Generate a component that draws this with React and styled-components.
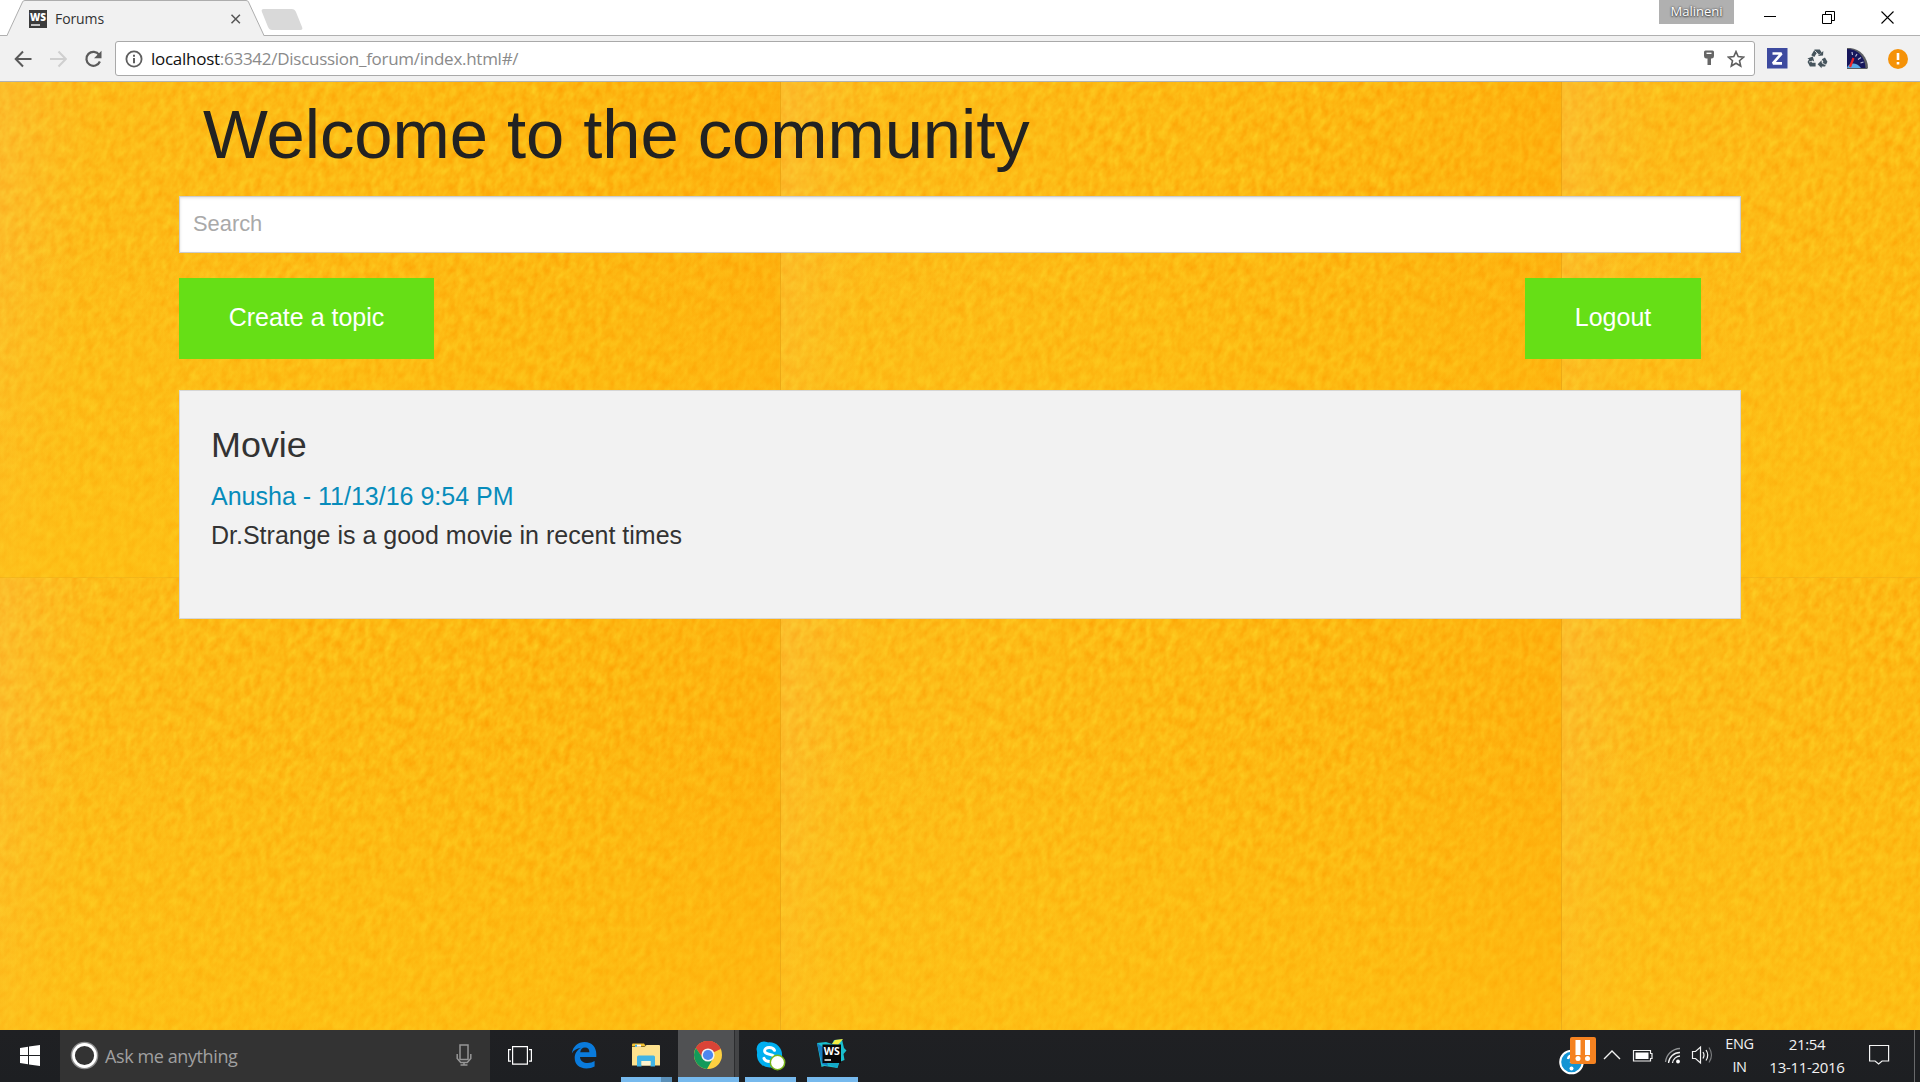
import React from "react";
import styled, { createGlobalStyle } from "styled-components";

const GlobalStyle = createGlobalStyle`
  html, body { margin: 0; padding: 0; overflow: hidden; }
  * { box-sizing: border-box; }
  svg { display: block; flex: none; }
`;

const ui = `"Open Sans", "Noto Sans", sans-serif`;
const arial = `"Liberation Sans", Arial, sans-serif`;

const Screen = styled.div`
  width: 1920px;
  height: 1082px;
  display: flex;
  flex-direction: column;
  overflow: hidden;
  background: #fff;
`;

/* ---------- browser frame ---------- */
const TabStrip = styled.div`
  height: 36px;
  display: flex;
  align-items: flex-start;
  background: linear-gradient(#b0b0b0, #b0b0b0) left bottom / 100% 1px no-repeat #fff;
`;
const Tab = styled.div`
  position: relative;
  width: 257px;
  height: 36px;
  margin-left: 7px;
  padding: 1px 22px 0 22px;
  display: flex;
  align-items: center;
`;
const TabShape = styled.svg`
  position: absolute;
  left: 0;
  top: 0;
`;
const TabIcon = styled.svg`
  position: relative;
`;
const TabTitle = styled.span`
  position: relative;
  flex: 1;
  margin-left: 8px;
  font: 14px/20px ${ui};
  letter-spacing: -0.1px;
  color: #333;
`;
const CloseGlyph = styled.svg`
  position: relative;
`;
const NewTab = styled.div`
  width: 34px;
  height: 21px;
  margin: 9px 0 0 1px;
  border-radius: 3px;
  background: #d9d9d9;
  transform: skewX(22deg);
`;
const StripSpacer = styled.div`
  flex: 1;
`;
const UserBadge = styled.div`
  width: 75px;
  height: 24px;
  background: #b0b0b0;
  color: #fff;
  font: 13px/22px ${ui};
  letter-spacing: 0px;
  text-align: center;
  text-shadow: 0 0 2px #333, 0 1px 2px #444;
`;
const WindowButton = styled.div`
  width: 58.5px;
  height: 34px;
  display: flex;
  align-items: center;
  justify-content: center;
`;
const WindowButtons = styled.div`
  display: flex;
  width: 186px;
  padding-left: 7px;
`;

const Toolbar = styled.div`
  height: 46px;
  display: flex;
  align-items: center;
  background: #f1f1f1;
  border-bottom: 1px solid #b2b2b2;
`;
const NavButtons = styled.div`
  width: 115px;
  padding-left: 14px;
  display: flex;
  gap: 17px;
`;
const AddressBar = styled.div`
  width: 1640px;
  height: 35px;
  padding: 0 9px 0 9px;
  display: flex;
  align-items: center;
  background: #fff;
  border: 1px solid #a9a9a9;
  border-radius: 3px;
`;
const Url = styled.span`
  flex: 1;
  margin-left: 8px;
  font: 17px/24px ${ui};
  letter-spacing: -0.27px;
  color: #8a8a8a;
  b { font-weight: 400; color: #111; }
`;
const AddressIcons = styled.div`
  display: flex;
  align-items: center;
  gap: 12px;
`;
const Extensions = styled.div`
  display: flex;
  align-items: center;
  gap: 19px;
  padding-left: 12px;
`;

/* ---------- page ---------- */
const Page = styled.main`
  position: relative;
  height: 948px;
  overflow: hidden;
  background: #fdb813;
  font-family: ${arial};
`;
const PaperBackdrop = styled.svg`
  position: absolute;
  left: 0;
  top: 0;
`;
const Container = styled.div`
  position: relative;
  width: 1562px;
  margin: 0 auto;
`;
const Title = styled.h1`
  margin: 0;
  height: 114px;
  padding: 5px 0 0 24px;
  font-weight: 400;
  font-size: 68.75px;
  line-height: 96px;
  letter-spacing: -0.05px;
  color: #222;
`;
const SearchField = styled.input`
  display: block;
  width: 100%;
  height: 57px;
  margin: 0 0 25px;
  padding: 0 12px 1px 13px;
  border: 1px solid #ccc;
  border-radius: 0;
  outline: 0;
  background: #fff;
  box-shadow: inset 0 1px 3px rgba(0, 0, 0, 0.12);
  font: 21.875px ${arial};
  &::placeholder { color: #a9a9a9; opacity: 1; }
`;
const Actions = styled.div`
  display: flex;
  justify-content: space-between;
  padding-right: 40px;
  margin-bottom: 31px;
`;
const Button = styled.button`
  height: 81px;
  width: ${(p) => p.$width}px;
  padding: 0 0 2px;
  border: 0;
  background: #66df16;
  color: #fff;
  font: 25px ${arial};
  white-space: nowrap;
`;
const Topic = styled.article`
  height: 229px;
  padding: 30px 31px;
  border: 1px solid #d6d6d6;
  background: #f2f2f2;
  color: #333;
`;
const TopicTitle = styled.h3`
  margin: 0;
  font-weight: 400;
  font-size: 35.94px;
  line-height: 48px;
`;
const TopicMeta = styled.a`
  display: block;
  margin-top: 7px;
  font-size: 25px;
  line-height: 40px;
  color: #078cbb;
`;
const TopicText = styled.p`
  margin: 0;
  font-size: 25px;
  line-height: 38px;
`;

/* ---------- taskbar ---------- */
const Taskbar = styled.footer`
  height: 52px;
  display: flex;
  background: linear-gradient(#1f2023, #1d1f22);
`;
const StartButton = styled.div`
  width: 60px;
  padding: 15px 0 0 20px;
`;
const Cortana = styled.div`
  width: 430px;
  display: flex;
  align-items: center;
  padding: 0 18px 0 10px;
  background: #333;
`;
const CortanaText = styled.span`
  flex: 1;
  margin-left: 6px;
  padding-bottom: 1px;
  font: 18px/26px ${ui};
  letter-spacing: -0.4px;
  color: #a0a0a0;
`;
const TaskItem = styled.div`
  position: relative;
  width: ${(p) => p.$width}px;
  margin-left: ${(p) => p.$gap || 0}px;
  display: flex;
  justify-content: center;
  padding-top: ${(p) => p.$top}px;
  padding-right: ${(p) => p.$shift || 0}px;
  background: ${(p) => (p.$active ? "linear-gradient(90deg, #505153 56px, #2c2d2f 56px, #2c2d2f 57px, #434446 57px)" : "none")};
`;
const Running = styled.i`
  position: absolute;
  left: 0;
  right: 0;
  bottom: 0;
  height: 5px;
  background: ${(p) => (p.$stacked ? "linear-gradient(90deg, #76b9ed 40px, #5a8fb8 40px)" : "#76b9ed")};
`;
const Tray = styled.div`
  margin-left: auto;
  width: 362px;
  display: flex;
  color: #f2f2f2;
`;
const TrayIcons = styled.div`
  width: 163px;
`;
const TrayText = styled.div`
  width: ${(p) => p.$width}px;
  padding-top: 3px;
  font: ${(p) => p.$size}px/22.500px ${ui};
  letter-spacing: ${(p) => p.$track}px;
  text-align: center;
  white-space: nowrap;
`;
const ActionCenter = styled.div`
  padding: 14px 0 0 ${(p) => p.$left}px;
`;
const DesktopEdge = styled.div`
  width: 6px;
  margin-left: auto;
  border-left: 1px solid #68696b;
`;

const Paper = () => {
  const tiles = [];
  [0, 496].forEach((y) => [0, 781, 1562].forEach((x) => tiles.push([x, y])));
  return (
    <PaperBackdrop width="1920" height="948" viewBox="0 0 1920 948">
      <defs>
        <filter id="grain" x="0" y="0" width="1" height="1" colorInterpolationFilters="sRGB">
          <feTurbulence type="fractalNoise" baseFrequency="0.15 0.09" numOctaves="3" seed="7" />
          <feColorMatrix values="0 0 0 0 0.992  0.24 0 0 0 0.6  0.16 0 0 0 -0.01  0 0 0 0 1" />
        </filter>
        <clipPath id="tile">
          <rect width="781" height="496" />
        </clipPath>
        <linearGradient id="shade" x1="0" x2="1" y1="0.2" y2="0.25">
          <stop offset="0" stopColor="#fac656" stopOpacity="0.36" />
          <stop offset="0.12" stopColor="#fcc52c" stopOpacity="0.28" />
          <stop offset="0.5" stopColor="#fdc01c" stopOpacity="0.18" />
          <stop offset="0.75" stopColor="#ffae0e" stopOpacity="0.15" />
          <stop offset="1" stopColor="#ffa60a" stopOpacity="0.4" />
        </linearGradient>
        <linearGradient id="foot" x1="0" x2="0" y1="0" y2="1">
          <stop offset="0.3" stopColor="#fec414" stopOpacity="0" />
          <stop offset="1" stopColor="#fec414" stopOpacity="0.5" />
        </linearGradient>
      </defs>
      {tiles.map(([x, y]) => (
        <g key={`${x}-${y}`} transform={`translate(${x} ${y})`} clipPath="url(#tile)">
          <g transform="rotate(24 390 248)">
            <rect x="-100" y="-220" width="981" height="936" filter="url(#grain)" />
          </g>
          <rect width="781" height="496" fill="url(#shade)" />
          <rect width="781" height="496" fill="url(#foot)" />
          <path d="M780.5 0v496" stroke="#d99c20" strokeOpacity="0.45" />
          <path d="M0 495.5h781" stroke="#d99c20" strokeOpacity="0.25" />
        </g>
      ))}
    </PaperBackdrop>
  );
};

const WsSmall = () => (
  <TabIcon width="18" height="18" viewBox="0 0 18 18">
    <rect width="18" height="18" fill="#3b3b3b" />
    <text x="9" y="11" fontFamily="Open Sans, sans-serif" fontSize="10.5" fontWeight="800" fill="#fff" textAnchor="middle" textLength="16" lengthAdjust="spacingAndGlyphs">WS</text>
    <path d="M2 15h9" stroke="#fff" strokeWidth="1.4" />
  </TabIcon>
);

const Recycle = () => (
  <svg width="21" height="21" viewBox="0 0 21 21" fill="none" stroke="#46545c" strokeWidth="3.6">
    <path d="M5.8 8.2 8.6 3.4h3.2l1.5 2.4" />
    <path d="M10.9 8l5.1-.4.3-4.6z" fill="#46545c" stroke="none" />
    <path d="M16.4 10.4l2 3.4-1.4 2.8h-3" />
    <path d="M14.6 12.2v8l-4-4z" fill="#46545c" stroke="none" />
    <path d="M8.6 16.6H4L2.6 14l1.4-2.6" />
    <path d="M.4 10.6l5.4-2.2 1.4 5z" fill="#46545c" stroke="none" />
    <path d="M7.5 2.5l3 3M15 15l4 2M2 14l4-1" stroke="#f1f1f1" strokeWidth=".8" />
  </svg>
);

const Gauge = () => (
  <svg width="21" height="21" viewBox="0 0 21 21">
    <path d="M0 0c11-1 21 8 21 20l-1 1H0z" fill="#5b5d63" />
    <path d="M0 1c10 0 18 7 18.5 19H0z" fill="#17175c" />
    <path d="M0 20c1-5 9-7 14 0z" fill="#56a8e6" />
    <path d="M5 4l.5 3M10 6l-1.5 2.5M14 9.500l-3 2M16.500 14l-3 1" stroke="#b9bdd8" strokeWidth="1.200" />
    <path d="M6.500 10 3 19" stroke="#ee2326" strokeWidth="2.200" />
  </svg>
);

const EdgeLogo = () => (
  <svg width="26" height="28" viewBox="0 0 26 28">
    <path d="M.8 12.500C2 5 7 .9 13.500.9c7.500 0 11.800 5.500 11.800 12v3H9c.3 4.200 3.600 6 7.600 6 2.700 0 5-.7 7-1.900v5.400c-2.300 1.300-5 2-8.200 2C8 27.400 3.700 23 3.700 17c0-4.500 2.400-8.300 6.600-10.200C5.500 7.200 2.500 9.500.8 12.500z" fill="#0a7bdc" />
    <path d="M9.200 11.200h9.200c0-2.900-1.500-4.700-4.400-4.700-2.700 0-4.400 2-4.800 4.700z" fill="#1f2124" />
  </svg>
);

const Explorer = () => (
  <svg width="28" height="24" viewBox="0 0 28 24">
    <path d="M0 1.500Q0 .5 1 .5h11l2 3H0z" fill="#f5c331" />
    <path d="M3 1.700h6v2H3z" fill="#fff" />
    <path d="M3 1.700h2v2H3z" fill="#40b4e6" />
    <path d="M0 4h12.500l2-2H27q1 0 1 1v19.500H0z" fill="#fee28e" />
    <path d="M5 23.500V14q0-1.500 1.500-1.500h15q1.500 0 1.500 1.500v9.500h-4.500V18h-9v5.500z" fill="#41b4e6" />
    <path d="M9.500 18h9v4.500h-9z" fill="#fff3cd" />
  </svg>
);

const ChromeLogo = () => (
  <svg width="28" height="28" viewBox="0 0 28 28">
    <circle cx="14" cy="14" r="14" fill="#fdd041" />
    <path d="M14 14 1.900 7A14 14 0 0 1 26.600 8z" fill="#da4437" />
    <path d="M14 8h12.600A14 14 0 0 0 1.900 7l6.600 10z" fill="#da4437" />
    <path d="M1.900 7A14 14 0 0 0 13 28l6-10.500L8.700 17z" fill="#139a5a" />
    <circle cx="14" cy="14" r="6.600" fill="#f3f3f3" />
    <circle cx="14" cy="14" r="5.100" fill="#4c87f0" />
  </svg>
);

const Skype = () => (
  <svg width="30" height="30" viewBox="0 0 30 30">
    <circle cx="8" cy="8" r="7.500" fill="#00aff0" />
    <circle cx="18.500" cy="19.500" r="7.800" fill="#00aff0" />
    <circle cx="13.500" cy="13.800" r="12.600" fill="#00aff0" />
    <path d="M18.500 9.300c-1-2-3-2.700-5.300-2.700-2.600 0-4.600 1.200-4.600 3.400 0 4.600 10.300 2.200 10.300 7 0 2.200-2.200 3.600-5 3.600-2.900 0-5-1-5.900-3.200" fill="none" stroke="#fff" strokeWidth="3" strokeLinecap="round" />
    <circle cx="21.500" cy="21.500" r="7.200" fill="#fff" stroke="#78b51a" strokeWidth="1.500" />
  </svg>
);

const WebStorm = () => (
  <svg width="30" height="30" viewBox="0 0 30 30">
    <path d="M0 4l9-1 6 2 2-4 8-.5 2 8.500 2.500 2.500-3 3.500 1 6-5 2-2 6-13-2-3 1z" fill="#1abfce" />
    <path d="M15 5l3-4 8-1-5 6z" fill="#f4ef43" />
    <path d="M0 4l5 21 6 2-4-18z" fill="#167bc1" />
    <path d="M10 25l12-2-2 6z" fill="#14a8c8" />
    <rect x="5.500" y="5.500" width="18.500" height="18.500" fill="#080808" />
    <text x="14.800" y="15.800" fontFamily="Open Sans, sans-serif" fontSize="10.500" fontWeight="700" fill="#fff" textAnchor="middle" textLength="16" lengthAdjust="spacingAndGlyphs">WS</text>
    <path d="M7.500 21h6.500" stroke="#fff" strokeWidth="1.500" />
  </svg>
);

const TrayGlyphs = () => (
  <svg width="163" height="52" viewBox="1558 1030 163 52" fill="none" stroke="#f2f2f2">
    <circle cx="1571.500" cy="1062" r="11.300" fill="#1494d4" stroke="#fff" strokeWidth="2" />
    <circle cx="1571.500" cy="1068.500" r="2" fill="#fff" stroke="none" />
    <path d="M1568 1059q1-4 4-3l-1 7" strokeWidth="2.500" stroke="#fff" />
    <rect x="1570" y="1037" width="26" height="27" rx="2" fill="#f58220" stroke="none" />
    <path d="M1575.500 1040h5v15h-5zM1585 1040h5v15h-5z" fill="#fff" stroke="none" />
    <circle cx="1578" cy="1058.500" r="2.500" fill="#fff" stroke="none" />
    <circle cx="1587.500" cy="1058.500" r="2.500" fill="#fff" stroke="none" />
    <path d="M1604 1059l8-8 8 8" strokeWidth="1.400" />
    <path d="M1633.500 1050.500h17v3h1.500v5h-1.500v2.500h-17z" strokeWidth="1.200" />
    <rect x="1635.500" y="1052.500" width="13" height="6.500" fill="#fff" stroke="none" />
    <g strokeWidth="1.300">
      <path d="M1665.500 1062A15 15 0 0 1 1680 1048.500" stroke="#909294" />
      <path d="M1668.500 1063A11.500 11.500 0 0 1 1680 1052.500" />
      <path d="M1672.500 1063A8 8 0 0 1 1680 1056" />
    </g>
    <circle cx="1678" cy="1061.500" r="1.900" fill="#fff" stroke="none" />
    <path d="M1692.500 1051.500h3l5-4.500v16l-5-4.500h-3z" strokeWidth="1.200" />
    <path d="M1703 1052q2 3 0 6.500M1706 1050q3.500 5 0 10.500" strokeWidth="1.200" />
    <path d="M1709 1047.500q5 7.500 0 15" stroke="#77797b" strokeWidth="1.200" />
  </svg>
);

export default function App() {
  return (
    <Screen>
      <GlobalStyle />
      <TabStrip>
        <Tab>
          <TabShape width="258" height="36" viewBox="0 0 258 36">
            <path d="M0 36 15.500 2Q16 .5 18 .5H239Q241 .5 241.500 2L257 36z" fill="#f1f1f1" />
            <path d="M0 35.500 15.500 2Q16 .5 18 .5H239Q241 .5 241.500 2L257 35.500" fill="none" stroke="#adadad" />
          </TabShape>
          <WsSmall />
          <TabTitle>Forums</TabTitle>
          <CloseGlyph width="15" height="10" viewBox="0 0 15 10" stroke="#555" strokeWidth="1.500">
            <path d="M4.500 .800l8.400 8.400M12.900.8 4.500 9.200" />
          </CloseGlyph>
        </Tab>
        <NewTab />
        <StripSpacer />
        <UserBadge>Malineni</UserBadge>
        <WindowButtons>
          <WindowButton>
            <svg width="12" height="12"><path d="M0 5.500h12" stroke="#000" /></svg>
          </WindowButton>
          <WindowButton>
            <svg width="13" height="13" fill="none" stroke="#000"><path d="M.5 3.500h9v9h-9zM3.500 3V.500h9v9H10" /></svg>
          </WindowButton>
          <WindowButton>
            <svg width="13" height="13" stroke="#000" strokeWidth="1.100"><path d="M.5.5l12 12M12.500.5l-12 12" /></svg>
          </WindowButton>
        </WindowButtons>
      </TabStrip>
      <Toolbar>
        <NavButtons>
          <svg width="18" height="18" fill="none" stroke="#5a5a5a" strokeWidth="2"><path d="M17.500 9H2M9 1.500 1.700 9 9 16.500" /></svg>
          <svg width="18" height="18" fill="none" stroke="#cfcfcf" strokeWidth="2"><path d="M1 9h15.500M9.500 1.500 16.800 9 9.500 16.500" /></svg>
          <svg width="19" height="18" fill="none" stroke="#5a5a5a" strokeWidth="2.200">
            <path d="M15.200 4.800A7 7 0 1 0 15.900 11.500" />
            <path d="M17.500.800v7.500H10z" fill="#5a5a5a" stroke="none" />
          </svg>
        </NavButtons>
        <AddressBar>
          <svg width="18" height="18" fill="none" stroke="#5f5f5f" strokeWidth="1.800">
            <circle cx="9" cy="9" r="7.600" />
            <path d="M9 8v5.200M9 4.800v1.900" strokeWidth="2" />
          </svg>
          <Url><b>localhost</b>:63342/Discussion_forum/index.html#/</Url>
          <AddressIcons>
            <svg width="12" height="17">
              <path d="M2.500.500h7q1.500 0 1.500 1.500v4q0 2-2 2.500H8V15H4.500V8.500H3Q1 8 1 6V2Q1 .5 2.500.500z" fill="#666" />
              <path d="M3.500 3.300h5" stroke="#fff" strokeWidth="1.400" />
            </svg>
            <svg width="18" height="18" viewBox="0 0 18 18">
              <path d="M9 1.600l2.200 5 5.400.5-4.100 3.600 1.200 5.300L9 13.200 4.300 16l1.200-5.300L1.400 7.100l5.400-.5z" fill="none" stroke="#5f5f5f" strokeWidth="1.600" />
            </svg>
          </AddressIcons>
        </AddressBar>
        <Extensions>
          <svg width="21" height="21">
            <rect width="20.500" height="20.500" fill="#3d4a9f" />
            <path d="M5.500 5.500h9L6 15.300h9" fill="none" stroke="#fff" strokeWidth="2.700" strokeLinejoin="bevel" />
          </svg>
          <Recycle />
          <Gauge />
          <svg width="21" height="20">
            <circle cx="11" cy="10" r="10" fill="#f59208" />
            <path d="M11 4v7M11 13v2.500" stroke="#fff" strokeWidth="2.600" />
          </svg>
        </Extensions>
      </Toolbar>

      <Page>
        <Paper />
        <Container>
          <Title>Welcome to the community</Title>
          <SearchField placeholder="Search" />
          <Actions>
            <Button $width={255}>Create a topic</Button>
            <Button $width={176}>Logout</Button>
          </Actions>
          <Topic>
            <TopicTitle>Movie</TopicTitle>
            <TopicMeta>Anusha - 11/13/16 9:54 PM</TopicMeta>
            <TopicText>Dr.Strange is a good movie in recent times</TopicText>
          </Topic>
        </Container>
      </Page>

      <Taskbar>
        <StartButton>
          <svg width="20" height="21" fill="#fff"><path d="M0 3l8-1.200V10H0zM9 1.600 20 0v10H9zM0 11h8v8.200L0 18zM9 11h11v10L9 19.400z" /></svg>
        </StartButton>
        <Cortana>
          <svg width="29" height="31" fill="none">
            <circle cx="14.500" cy="14.500" r="12.800" stroke="#8d8d8d" strokeWidth="2" />
            <circle cx="14.500" cy="14.500" r="11" stroke="#fff" strokeWidth="2.800" />
          </svg>
          <CortanaText>Ask me anything</CortanaText>
          <svg width="16" height="24" fill="none" stroke="#969696" strokeWidth="1.500">
            <rect x="4" y="1" width="8" height="14.500" />
            <path d="M1.200 10v4.500l3.500 4h6.600l3.500-4V10M8 18.500V21M4.500 21h7" />
          </svg>
        </Cortana>
        <TaskItem $width={60} $top={16}>
          <svg width="24" height="19" fill="none" stroke="#fff" strokeWidth="1.200">
            <path d="M4.600.600h14.800v17.600H4.600zM3 3.600H.6v11.600H3M21 3.600h2.400v11.600H21" />
          </svg>
        </TaskItem>
        <TaskItem $width={51} $gap={8} $top={11}><EdgeLogo /></TaskItem>
        <TaskItem $width={51} $gap={12} $top={13} $shift={2}><Explorer /><Running $stacked /></TaskItem>
        <TaskItem $width={61} $gap={6} $top={11} $shift={2}  $active><ChromeLogo /><Running /></TaskItem>
        <TaskItem $width={51} $gap={6} $top={11}><Skype /><Running /></TaskItem>
        <TaskItem $width={51} $gap={11} $top={9} $shift={2}><WebStorm /><Running /></TaskItem>
        <Tray>
          <TrayIcons><TrayGlyphs /></TrayIcons>
          <TrayText $width={37} $size={14.5} $track={-0.4}>ENG<br />IN</TrayText>
          <TrayText $width={98} $size={15} $track={-0.3}>21:54<br />13-11-2016</TrayText>
          <ActionCenter $left={13}>
            <svg width="21" height="22" fill="none" stroke="#f5f5f5" strokeWidth="1.200"><path d="M.6 1.500h19v15.500h-6.500l-3.500 3-3.500-3H.600z" /></svg>
          </ActionCenter>
          <DesktopEdge />
        </Tray>
      </Taskbar>
    </Screen>
  );
}
